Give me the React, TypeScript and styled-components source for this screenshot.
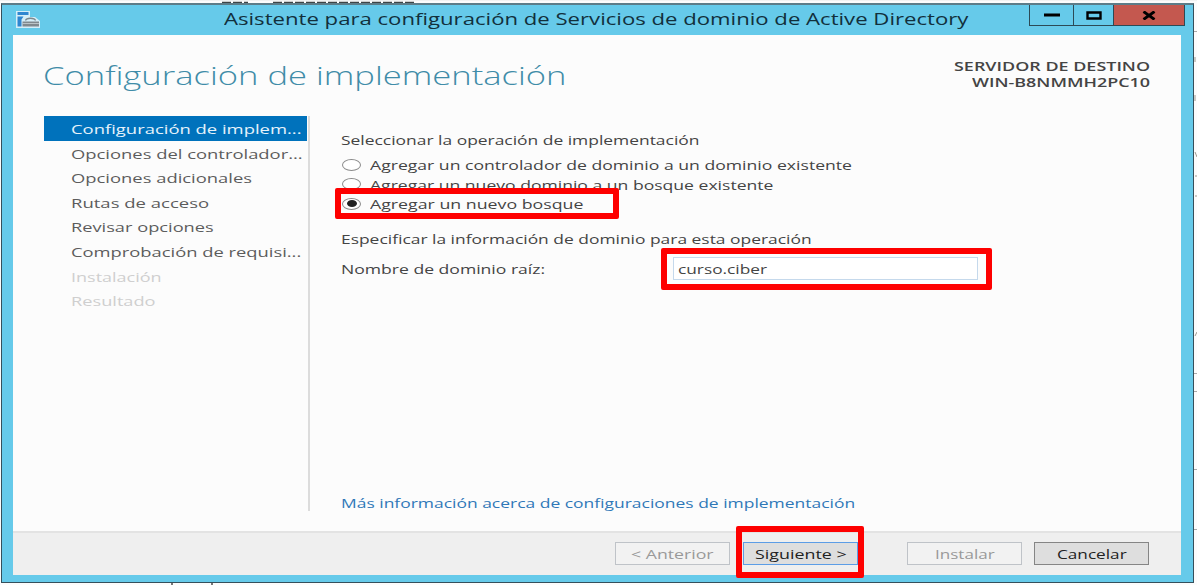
import React, { useLayoutEffect, useRef, useState } from "react";
import styled, { createGlobalStyle } from "styled-components";

const Global = createGlobalStyle`
  * { box-sizing: border-box; }
  html, body { margin: 0; padding: 0; }
  body { background: #fdfdfd; overflow: hidden; font-family: "Open Sans", "Noto Sans", sans-serif; }
`;

const Desktop = styled.div`
  position: relative;
  width: 1197px;
  height: 585px;
  padding: 3px 3px 1px 1px;
  overflow: hidden;
  background: #fcfcfc;
`;

const Backdrop = styled.svg`
  position: absolute;
  inset: 0;
`;

const Window = styled.div`
  position: relative;
  width: 1193px;
  height: 580px;
  display: flex;
  flex-direction: column;
  background: #66caea;
  border: 1px solid #35505c;
  border-top: 2px solid #5d7c88;
  padding: 0 11px 7px;
`;

const TitleBar = styled.header`
  height: 30px;
  flex: none;
  display: flex;
  align-items: flex-start;
`;

const AppIcon = styled.svg`
  flex: none;
  margin: 5px 0 0 2px;
`;

const TitleText = styled.div`
  margin: 2px 0 0 182px;
  width: 805px;
`;

const WindowButtons = styled.div`
  display: flex;
  flex: none;
  height: 21px;
  margin: 0 -3px 0 0;
  margin-left: auto;
  border: 1px solid #2c4a56;
  border-top: 0;
`;

const WindowButton = styled.div<{ $width: number; $danger?: boolean }>`
  width: ${(p) => p.$width}px;
  display: flex;
  align-items: center;
  justify-content: center;
  background: ${(p) => (p.$danger ? "#c4584f" : "transparent")};
  & + & { border-left: 1px solid #2c4a56; }
`;

const Client = styled.div`
  flex: 1;
  display: flex;
  flex-direction: column;
  background: #fcfcfc;
  margin-right: 1px;
`;

const Header = styled.div`
  height: 81px;
  display: flex;
  justify-content: space-between;
  padding: 20px 31px 0 30px;
`;

const Server = styled.div`
  display: flex;
  flex-direction: column;
  align-items: flex-end;
  padding-top: 3px;
`;

const Body = styled.div`
  height: 415px;
  display: flex;
`;

const Sidebar = styled.nav`
  width: 266px;
  margin-left: 31px;
  height: 395px;
  border-right: 2px solid #dcdcdc;
`;

const Step = styled.div<{ $active?: boolean }>`
  width: 263px;
  height: 24.6px;
  padding: 3px 0 0 27px;
  background: ${(p) => (p.$active ? "#0072bc" : "transparent")};
`;

const Content = styled.main`
  flex: 1;
  padding: 14px 0 0 31px;
  display: flex;
  flex-direction: column;
`;

const RadioRow = styled.div`
  height: 19.5px;
  display: flex;
  align-items: center;
`;

const RadioGroup = styled.div`
  padding-top: 6px;
`;

const Radio = styled.span<{ $checked?: boolean }>`
  width: 19px;
  height: 12px;
  margin: 0 9px 0 1px;
  border: 1px solid #8a8a8a;
  border-radius: 50%;
  display: flex;
  align-items: center;
  justify-content: center;
  background: #fff;
  &::after {
    content: "";
    width: 10px;
    height: 7px;
    border-radius: 50%;
    background: ${(p) => (p.$checked ? "#222" : "transparent")};
  }
`;

const Subheading = styled.div`
  margin-top: 15px;
`;

const Field = styled.label`
  display: flex;
  align-items: center;
  margin-top: 9px;
  height: 23px;
`;

const Input = styled.div`
  width: 305px;
  height: 23px;
  margin-left: 128px;
  padding: 1px 0 0 4px;
  border: 1px solid #c5d9ec;
  background: #fff;
`;

const More = styled.div`
  margin-top: 213px;
`;

const Footer = styled.footer`
  flex: 1;
  display: flex;
  align-items: flex-start;
  border-top: 2px solid #e3e3e3;
  background: #efefef;
  padding: 9px 0 0 602px;
`;

const Button = styled.div<{ $kind: "disabled" | "primary" | "normal"; $gap: number }>`
  width: 115px;
  height: 23px;
  margin-right: ${(p) => p.$gap}px;
  display: flex;
  justify-content: center;
  padding-top: 1px;
  border: 1px solid ${(p) => ({ disabled: "#bfc3c8", primary: "#5c9de6", normal: "#858585" })[p.$kind]};
  background: ${(p) => (p.$kind === "disabled" ? "#f2f2f2" : "#dedede")};
`;

const Highlight = styled.div<{ $x: number; $y: number; $w: number; $h: number }>`
  position: absolute;
  left: ${(p) => p.$x}px;
  top: ${(p) => p.$y}px;
  width: ${(p) => p.$w}px;
  height: ${(p) => p.$h}px;
  border: 6px solid #fe0000;
  border-radius: 2px;
`;

const TextBox = styled.span<{ $width: number; $size: number; $line: number; $color: string; $weight: number }>`
  display: block;
  flex: none;
  width: ${(p) => p.$width}px;
  height: ${(p) => p.$line}px;
  line-height: ${(p) => p.$line + 2}px;
  font-size: ${(p) => p.$size}px;
  font-weight: ${(p) => p.$weight};
  color: ${(p) => p.$color};
  white-space: nowrap;
`;

const Glyphs = styled.span`
  display: inline-block;
  transform-origin: 0 50%;
`;

type WideTextProps = {
  children: string;
  width: number;
  size?: number;
  line?: number;
  color?: string;
  weight?: number;
};

/* Stretches one line of text horizontally until it fills the given width. */
function WideText({ children, width, size = 13, line = 19, color = "#444", weight = 400 }: WideTextProps) {
  const ref = useRef<HTMLSpanElement>(null);
  const [scale, setScale] = useState(1);
  useLayoutEffect(() => {
    if (ref.current) setScale(width / ref.current.offsetWidth);
  }, [children, width]);
  return (
    <TextBox $width={width} $size={size} $line={line} $color={color} $weight={weight}>
      <Glyphs ref={ref} style={{ transform: `scaleX(${scale})` }}>{children}</Glyphs>
    </TextBox>
  );
}

const steps: { label: string; width: number; state?: "active" | "disabled" }[] = [
  { label: "Configuración de implem...", width: 231, state: "active" },
  { label: "Opciones del controlador...", width: 232 },
  { label: "Opciones adicionales", width: 181 },
  { label: "Rutas de acceso", width: 138 },
  { label: "Revisar opciones", width: 143 },
  { label: "Comprobación de requisi...", width: 230 },
  { label: "Instalación", width: 90, state: "disabled" },
  { label: "Resultado", width: 84, state: "disabled" },
];

const options = [
  { label: "Agregar un controlador de dominio a un dominio existente", width: 482 },
  { label: "Agregar un nuevo dominio a un bosque existente", width: 404 },
  { label: "Agregar un nuevo bosque", width: 213, checked: true },
];

const stepColor = { active: "#e6f3fb", disabled: "#cfcfcf", normal: "#5c5c5c" };

export default function App() {
  return (
    <>
      <Global />
      <Desktop>
        <Backdrop width="1197" height="585">
          <path d="M0 .5H1197" stroke="#f2f2f2" />
          <path d="M222 2.5H248M273 2.5H416" stroke="#3d4446" strokeWidth="1.4" strokeDasharray="9 2" />
          <path d="M172 583v2M212 583v2" stroke="#777" strokeWidth="2" />
          <path d="M1194 31.5h3M1194 373.5h3M1194 391.5h3M1194 469.5h3M1194 529.5h3" stroke="#aaa" />
          <path d="M1195 57v5M1195 95v6M1195 152l2 5M1195 176h2M1195 196h2M1195 336l2-4" stroke="#a09a90" />
        </Backdrop>
        <Window>
          <TitleBar>
            <AppIcon width="27" height="19" viewBox="0 0 27 19">
              <path d="M1 1h14v6h5l5 4v7H1z" fill="#d5eef8" />
              <path d="M2.5 2h11v3h-11zM2.5 6.5h6l-2 3v7h-4z" fill="#2f86d0" />
              <path d="M10.500 10.500c1-3 9-3 10 0" fill="none" stroke="#7d878c" strokeWidth="1.300" />
              <path d="M7.500 11.500h16.500v5H7.500z" fill="#80898e" />
              <path d="M7.500 13.500h16.500" stroke="#c9d2d6" strokeWidth=".8" />
            </AppIcon>
            <TitleText>
              <WideText width={744} size={16} line={23} color="#12303c">Asistente para configuración de Servicios de dominio de Active Directory</WideText>
            </TitleText>
            <WindowButtons>
              <WindowButton $width={43}>
                <svg width="16" height="4"><path d="M0 2h16" stroke="#000" strokeWidth="3" /></svg>
              </WindowButton>
              <WindowButton $width={40}>
                <svg width="16" height="9"><path d="M1.5 1.5h13v6h-13z" fill="none" stroke="#000" strokeWidth="2.4" /></svg>
              </WindowButton>
              <WindowButton $width={71} $danger>
                <svg width="14" height="9"><path d="M1.5.5l11 8M12.5.5l-11 8" stroke="#000" strokeWidth="2.8" /></svg>
              </WindowButton>
            </WindowButtons>
          </TitleBar>
          <Client>
            <Header>
              <WideText width={524} size={26} line={38} color="#3f8ca8" weight={300}>Configuración de implementación</WideText>
              <Server>
                <WideText width={196} line={15} weight={600}>SERVIDOR DE DESTINO</WideText>
                <WideText width={178} line={17} weight={600}>WIN-B8NMMH2PC10</WideText>
              </Server>
            </Header>
            <Body>
              <Sidebar>
                {steps.map((s) => (
                  <Step key={s.label} $active={s.state === "active"}>
                    <WideText width={s.width} color={stepColor[s.state ?? "normal"]}>{s.label}</WideText>
                  </Step>
                ))}
              </Sidebar>
              <Content>
                <WideText width={359}>Seleccionar la operación de implementación</WideText>
                <RadioGroup>
                  {options.map((o) => (
                    <RadioRow key={o.label}>
                      <Radio $checked={o.checked} />
                      <WideText width={o.width}>{o.label}</WideText>
                    </RadioRow>
                  ))}
                </RadioGroup>
                <Subheading>
                  <WideText width={470}>Especificar la información de dominio para esta operación</WideText>
                </Subheading>
                <Field>
                  <WideText width={204}>Nombre de dominio raíz:</WideText>
                  <Input><WideText width={89}>curso.ciber</WideText></Input>
                </Field>
                <More>
                  <WideText width={514} color="#2f78b8">Más información acerca de configuraciones de implementación</WideText>
                </More>
              </Content>
            </Body>
            <Footer>
              <Button $kind="disabled" $gap={13}><WideText width={83} color="#999">{"< Anterior"}</WideText></Button>
              <Button $kind="primary" $gap={49}><WideText width={92} color="#222">{"Siguiente >"}</WideText></Button>
              <Button $kind="disabled" $gap={12}><WideText width={59} color="#999">Instalar</WideText></Button>
              <Button $kind="normal" $gap={0}><WideText width={70} color="#222">Cancelar</WideText></Button>
            </Footer>
          </Client>
        </Window>
        <Highlight $x={335} $y={188} $w={284} $h={31} />
        <Highlight $x={661} $y={248} $w={331} $h={42} />
        <Highlight $x={736} $y={526} $w={128} $h={52} />
      </Desktop>
    </>
  );
}
